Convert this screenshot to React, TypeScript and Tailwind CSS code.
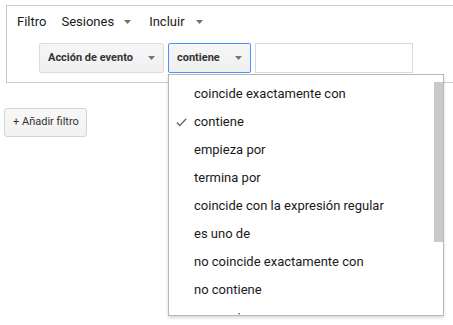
const options = [
  'coincide exactamente con',
  'contiene',
  'empieza por',
  'termina por',
  'coincide con la expresión regular',
  'es uno de',
  'no coincide exactamente con',
  'no contiene',
  'no empieza por',
  'no termina por',
];

const Caret = ({ className = '' }: { className?: string }) => (
  <svg width="7" height="4" viewBox="0 0 7 4" className={className}>
    <path d="M0 0 L7 0 L3.5 4 Z" fill="#737373" />
  </svg>
);

const Check = () => (
  <svg width="11" height="9" viewBox="0 0 11 9" className="absolute left-[7px] top-[10px]">
    <path d="M0.8 4.6 L3.8 7.6 L10.2 0.8" fill="none" stroke="#6b6b6b" strokeWidth="1.4" />
  </svg>
);

export default function App() {
  const selected = 'contiene';

  return (
    <div className="relative w-full h-screen bg-white overflow-hidden font-['Roboto','Liberation_Sans',sans-serif] text-[#1a1a1a]">
      <div className="mt-[5px] ml-[6px] mr-[-20px] border border-[#cbcbcb]">
        <div className="h-[32px] flex items-center pl-[10px] text-[13px]">
          <span>Filtro</span>
          <span className="ml-[15px]">Sesiones</span>
          <Caret className="ml-[10px]" />
          <span className="ml-[18px]">Incluir</span>
          <Caret className="ml-[11px]" />
        </div>
        <div className="mt-[5px] pb-[9px] pl-[32px] flex gap-[4px] text-[11px] font-bold">
          <div className="w-[125px] h-[30px] flex items-center pl-[8px] pr-[8px] border border-[#dcdcdc] rounded-[2px] bg-gradient-to-b from-[#f6f6f6] to-[#f0f0f0] text-[#333]">
            <span className="flex-1">Acción de evento</span>
            <Caret />
          </div>
          <div className="w-[83px] h-[30px] flex items-center pl-[8px] pr-[8px] border border-[#4d90fe] rounded-[2px] bg-gradient-to-b from-[#f6f6f6] to-[#f0f0f0] text-[#333]">
            <span className="flex-1">contiene</span>
            <Caret />
          </div>
          <div className="w-[158px] h-[30px] border border-[#d9d9d9] bg-white" />
        </div>
      </div>

      <div className="mt-[25px] ml-[4px] w-[83px] h-[29px] flex items-center pl-[8px] text-[11px] text-[#333] border border-[#d3d3d3] rounded-[3px] bg-gradient-to-b from-[#f8f8f8] to-[#f1f1f1]">
        + Añadir filtro
      </div>

      {/* menú desplegable abierto sobre el panel */}
      <div className="absolute left-[168px] top-[74px] w-[276px] h-[242px] border border-[#b8b8b8] bg-white shadow-[0_2px_3px_rgba(0,0,0,0.15)] overflow-hidden">
        <div className="pt-[5px] text-[13px] text-[#1a1a1a]">
          {options.map((o) => (
            <div key={o} className="relative h-[28px] flex items-center pl-[25px]">
              {o === selected && <Check />}
              {o}
            </div>
          ))}
        </div>
        <div className="absolute right-0 top-[7px] w-[9px] h-[160px] bg-[#c9c9c9]" />
      </div>
    </div>
  );
}
